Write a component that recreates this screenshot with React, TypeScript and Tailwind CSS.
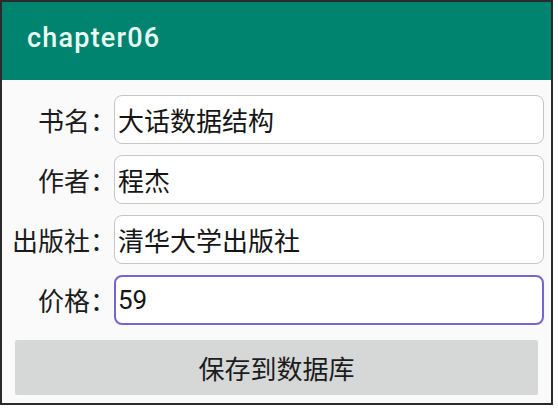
import React, { useState } from "react";

const fields = [
  { label: "书名：", value: "大话数据结构" },
  { label: "作者：", value: "程杰" },
  { label: "出版社：", value: "清华大学出版社" },
  { label: "价格：", value: "59", focused: true },
];

export default function App() {
  const [values, setValues] = useState(fields.map((f) => f.value));

  return (
    <div
      className="w-[558px] h-[412px] bg-white"
      style={{ fontFamily: '"Noto Sans CJK SC", sans-serif' }}
    >
      <div className="w-[553px] h-[405px] border-2 border-[#2b2b2b] bg-[#fafafa] flex flex-col">
        <div className="h-[78px] bg-[#00836f] flex items-center pl-[25px] shrink-0">
          <span
            className="text-[27px] font-medium text-[#eafaf4] tracking-[1.2px] pb-[6px]"
            style={{ fontFamily: "Roboto, sans-serif" }}
          >
            chapter06
          </span>
        </div>

        <div className="flex flex-col gap-[11px] pt-[15px] pr-[7px]">
          {fields.map((f, i) => (
            <div key={f.label} className="flex items-center h-[49px]">
              <label className="w-[114px] shrink-0 text-right text-[26px] text-[#1c1c1c] leading-none">
                {f.label}
              </label>
              <input
                className={
                  f.focused
                    ? "-ml-[2px] flex-1 h-[50px] rounded-[8px] border-2 border-[#7566d2] bg-white pl-[2px] text-[26px] text-[#151515] outline-none"
                    : "-ml-[2px] flex-1 h-[49px] rounded-[8px] border-[1.5px] border-[#c6c6c6] bg-white pl-[3px] text-[26px] text-[#151515] outline-none"
                }
                style={{ fontFamily: 'Roboto, "Noto Sans CJK SC", sans-serif' }}
                value={values[i]}
                onChange={(e) => {
                  const next = [...values];
                  next[i] = e.target.value;
                  setValues(next);
                }}
              />
            </div>
          ))}
        </div>

        <div className="pl-[13px] pr-[13px] pt-[16px]">
          <button className="w-full h-[55px] bg-[#d6d7d7] rounded-[2px] text-[26px] text-[#1c1c1c]">
            保存到数据库
          </button>
        </div>
      </div>
    </div>
  );
}
